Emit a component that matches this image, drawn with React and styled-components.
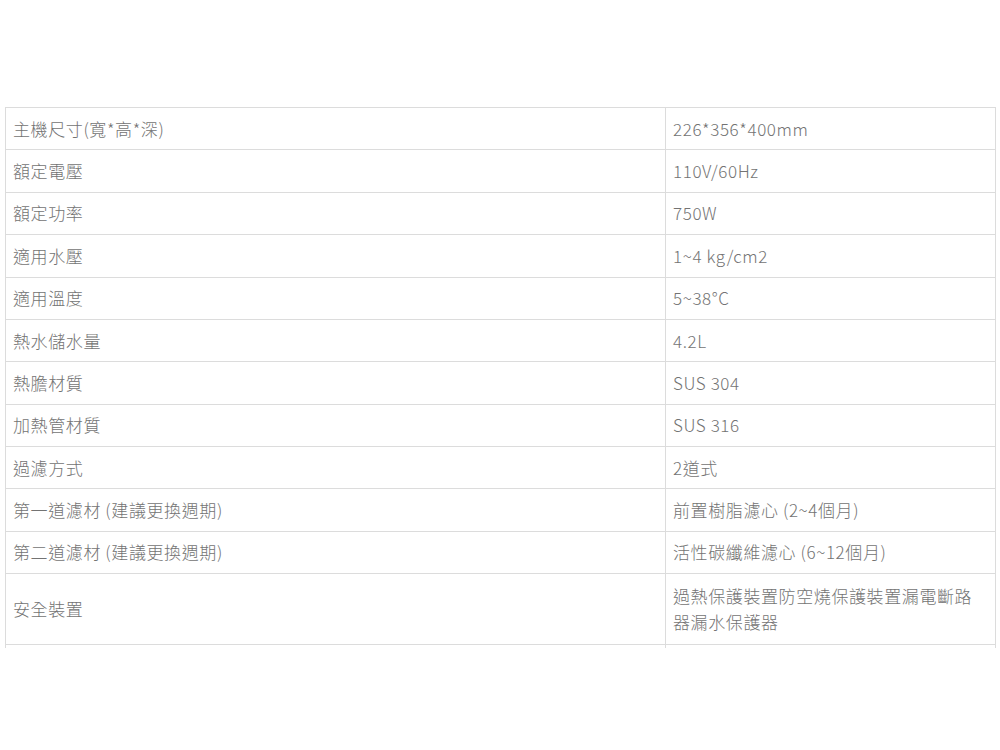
import React from 'react';
import styled, { createGlobalStyle } from 'styled-components';

const specs = [
    ['主機尺寸(寬*高*深)', '226*356*400mm'],
    ['額定電壓', '110V/60Hz'],
    ['額定功率', '750W'],
    ['適用水壓', '1~4 kg/cm2'],
    ['適用溫度', '5~38°C'],
    ['熱水儲水量', '4.2L'],
    ['熱膽材質', 'SUS 304'],
    ['加熱管材質', 'SUS 316'],
    ['過濾方式', '2道式'],
    ['第一道濾材 (建議更換週期)', '前置樹脂濾心 (2~4個月)'],
    ['第二道濾材 (建議更換週期)', '活性碳纖維濾心 (6~12個月)'],
    ['安全裝置', '過熱保護裝置防空燒保護裝置漏電斷路器漏水保護器'],
];

function App() {
  return (
    <Page>
        <GlobalStyle />
        <Clip>
            <SpecTable>
                <colgroup>
                    <col style={{ width: 660 }} />
                    <col />
                </colgroup>
                <tbody>
                    {specs.map(([label, value], i) => (
                        <tr key={label}>
                            <Cell $tall={i === 11}>{label}</Cell>
                            <Cell $tall={i === 11}>{value}</Cell>
                        </tr>
                    ))}
                    {/* next row, cut off by the frame */}
                    <tr>
                        <Cell>&nbsp;</Cell>
                        <Cell>&nbsp;</Cell>
                    </tr>
                </tbody>
            </SpecTable>
        </Clip>
    </Page>
  )
}

export default App

const GlobalStyle = createGlobalStyle`
    body{
        margin:0;
        background:#fff;
    }
`

const Page = styled.div`
    width:1000px;
    height:750px;
    padding-top:107px;
    box-sizing:border-box;
`

const Clip = styled.div`
    margin-left:5px;
    width:991px;
    height:541px;
    overflow:hidden;
`

const SpecTable = styled.table`
    width:991px;
    border-collapse:collapse;
    table-layout:fixed;
    font-family:"Noto Sans CJK TC", "Noto Sans", sans-serif;
    font-size:17px;
    font-weight:300;
    letter-spacing:0.6px;
    color:#737373;
`

const Cell = styled.td`
    border:1px solid #dcdcdc;
    padding:${props => props.$tall ? '9px 7px' : '7.7px 7px'};
    line-height:26px;
    vertical-align:middle;
    text-align:left;
`
